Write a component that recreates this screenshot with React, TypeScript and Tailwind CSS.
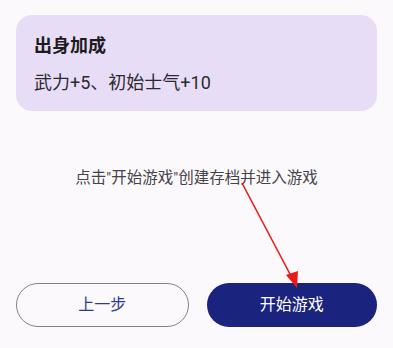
import React from "react";

export default function App() {
  const font = { fontFamily: 'Roboto, "Noto Sans CJK SC", sans-serif' };
  return (
    <div
      className="relative w-[393px] h-[348px] bg-[#fbf9fc] flex flex-col overflow-hidden"
      style={font}
    >
      <div className="mt-[15px] mx-4 h-[96px] rounded-[16px] bg-[#e8ddf6] px-[18px] pt-[19px] flex flex-col">
        <div className="text-[18px] leading-[24px] font-bold text-[#1d1b20]">出身加成</div>
        <div className="mt-[12px] text-[18px] leading-[26px] text-[#2b2930]">武力+5、初始士气+10</div>
      </div>

      <div className="mt-[55px] text-center text-[15.5px] leading-[24px] text-[#45434a]">
        点击"开始游戏"创建存档并进入游戏
      </div>

      <div className="mt-auto mb-[21px] mx-4 flex gap-[18px]">
        <button className="flex-1 h-[44px] rounded-full border border-[#85838a] bg-transparent text-[16px] text-[#2f3a8f] flex items-center justify-center">
          上一步
        </button>
        <button className="flex-1 h-[44px] rounded-full bg-[#1a237e] text-[16px] text-white flex items-center justify-center">
          开始游戏
        </button>
      </div>

      <svg
        className="absolute left-0 top-0 pointer-events-none"
        width="393"
        height="348"
        viewBox="0 0 393 348"
      >
        <line x1="242" y1="183" x2="291" y2="276" stroke="#f01818" strokeWidth="1.6" />
        <polygon points="297,288 286,275 298,271" fill="#f01818" />
      </svg>
    </div>
  );
}
